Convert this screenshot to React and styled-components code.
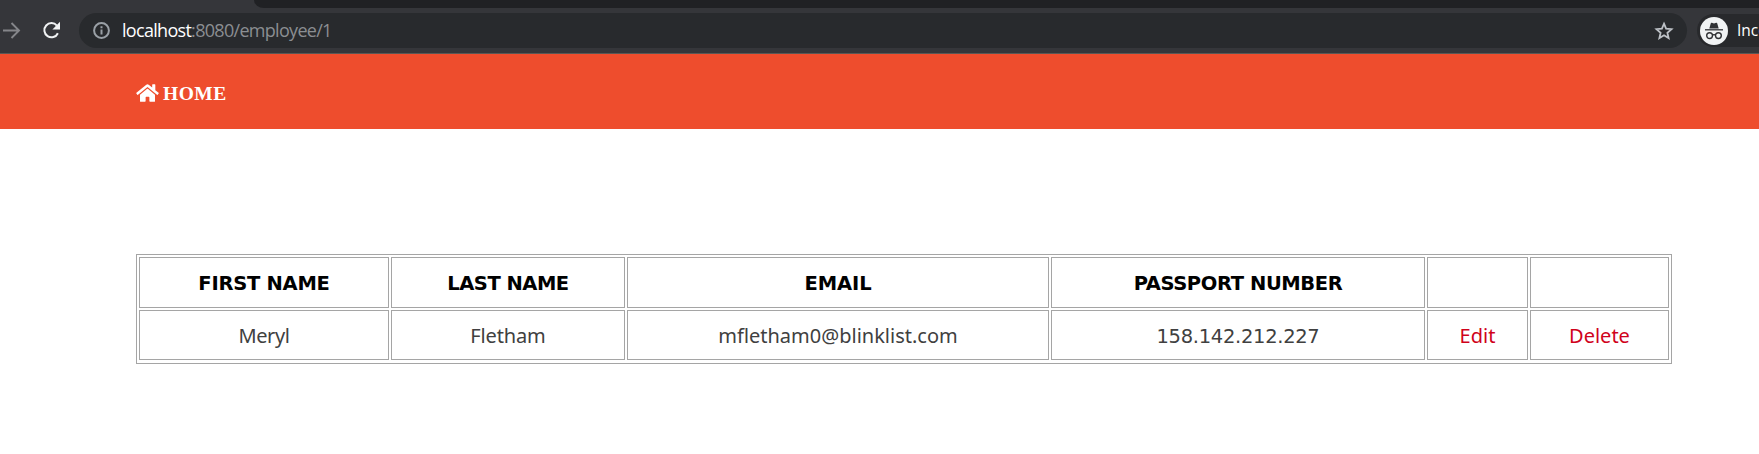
import React from "react";
import styled, { createGlobalStyle } from "styled-components";
import { FaHome } from "react-icons/fa";

const GlobalStyle = createGlobalStyle`
  * { box-sizing: border-box; }
  body { margin: 0; background: #fff; overflow: hidden; }
`;

const Page = styled.div`
  width: 100%;
  height: 454px;
  overflow: hidden;
`;

const Browser = styled.header`
  display: flex;
  flex-direction: column;
  height: 54px;
  background: #35363a;
  border-bottom: 1px solid #5a5754;
  overflow: hidden;
`;

const TabStrip = styled.div`
  flex: none;
  height: 8px;
  margin-left: 254px;
  background: #202124;
  border-bottom-left-radius: 10px 8px;
`;

const Toolbar = styled.div`
  display: flex;
  align-items: center;
  height: 35px;
  margin-top: 5px;
`;

const ToolIcon = styled.svg`
  flex: none;
  display: block;
  width: ${(p) => p.$size}px;
  height: ${(p) => p.$size}px;
  margin-left: ${(p) => p.$gap || 0}px;
  color: ${(p) => p.$color};
`;

const AddressBar = styled.div`
  flex: none;
  display: flex;
  align-items: center;
  width: 1608px;
  height: 35px;
  margin-left: 17px;
  padding: 0 13px 0 14px;
  border-radius: 18px;
  background: #282a2d;
`;

const Url = styled.div`
  flex: 1;
  margin-left: 12px;
  padding-bottom: 1px;
  font: 18px/32px "Open Sans", sans-serif;
  letter-spacing: -0.7px;
  color: #8b8e92;
  white-space: nowrap;
`;

const Host = styled.span`
  color: #fff;
`;

const IncognitoChip = styled.div`
  flex: none;
  display: flex;
  align-items: center;
  width: 120px;
  height: 33px;
  margin-left: 10px;
  padding-left: 3px;
  border-radius: 17px;
  background: #28292c;
  color: #fff;
  font: 15.5px/30px "Open Sans", sans-serif;
`;

const ChipLabel = styled.span`
  margin-left: 9px;
  padding-bottom: 2px;
`;

const Navbar = styled.nav`
  display: flex;
  align-items: center;
  height: 75px;
  padding: 4px 0 0 136px;
  background: #ee4d2d;
`;

const HomeLink = styled.a`
  display: flex;
  align-items: center;
  gap: 4px;
  color: #fff;
  font: bold 19.5px/25px "Liberation Serif", serif;
  letter-spacing: 0.5px;

  svg { width: 23px; height: 20px; margin-top: -2px; }
`;

const Table = styled.div`
  display: grid;
  grid-template-columns: 250px 234px 422px 374px 101px 139px;
  grid-template-rows: 51px 50px;
  gap: 2px;
  width: 1536px;
  margin: 125px 0 0 136px;
  padding: 2px 2px 3px;
  border: 1px solid #a5a5a5;
`;

const Cell = styled.div`
  display: flex;
  align-items: center;
  justify-content: center;
  padding-top: 2px;
  border: 1px solid #a5a5a5;
  color: #404040;
  font: 20px/24px "Noto Sans", sans-serif;
  letter-spacing: ${(p) => p.$spacing || 0}px;
`;

const HeadCell = styled(Cell)`
  color: #000;
  font: bold 19.5px/24px "DejaVu Sans", sans-serif;
`;

const NumberCell = styled(Cell)`
  padding-top: 4px;
  font: 19.5px/24px "DejaVu Sans", sans-serif;
`;

const ActionLink = styled.a`
  color: #d0021b;
`;

const headings = [
  ["FIRST NAME", -0.25],
  ["LAST NAME", -0.5],
  ["EMAIL", -0.1],
  ["PASSPORT NUMBER", -0.4],
  ["", 0],
  ["", 0],
];

export default function App() {
  return (
    <Page>
      <GlobalStyle />
      <Browser>
        <TabStrip />
        <Toolbar>
          <ToolIcon $size={20} $gap={1} $color="#85868a" viewBox="0 0 20 20" fill="none" stroke="currentColor" strokeWidth="1.9">
            <path d="M2 9.5h16M10.5 2l7.5 7.5-7.5 7.5" />
          </ToolIcon>
          <ToolIcon $size={20} $gap={21} $color="#f1f3f4" viewBox="0 0 20 20" fill="none">
            <path d="M15.9 12.2A7.1 7.1 0 1 1 14.9 4.6" stroke="currentColor" strokeWidth="2" />
            <path d="M18 .8v7.6h-7.6z" fill="currentColor" />
          </ToolIcon>
          <AddressBar>
            <ToolIcon $size={17} $color="#9aa0a6" viewBox="0 0 17 17" fill="none" stroke="currentColor">
              <circle cx="8.5" cy="8.5" r="7.4" strokeWidth="2" />
              <path d="M8.5 7.5v5M8.5 4.3v2" strokeWidth="2" />
            </ToolIcon>
            <Url><Host>localhost</Host>:8080/employee/1</Url>
            <ToolIcon $size={20} $color="#bdc1c6" viewBox="0 0 20 20" fill="none" stroke="currentColor" strokeWidth="1.8">
              <path d="M10 2.7l2.1 5 5.4.5-4.1 3.6 1.2 5.3L10 14.3l-4.6 2.8 1.2-5.3-4.1-3.6 5.4-.5z" />
            </ToolIcon>
          </AddressBar>
          <IncognitoChip>
            <ToolIcon $size={28} viewBox="0 0 28 28">
              <circle cx="14" cy="14" r="14" fill="#f1f3f4" />
              <path d="M9.3 11.5l1.5-5.2q.3-.8 1.1-.5l2.1.6 2.1-.6q.8-.3 1.1.5l1.5 5.2z" fill="#303134" />
              <path d="M5 12.8h18" stroke="#303134" strokeWidth="1.3" />
              <g fill="none" stroke="#303134" strokeWidth="1.4">
                <circle cx="9.6" cy="18.6" r="2.9" />
                <circle cx="18.4" cy="18.6" r="2.9" />
                <path d="M12.4 18q1.6-.8 3.2 0" />
              </g>
            </ToolIcon>
            <ChipLabel>Incognito</ChipLabel>
          </IncognitoChip>
        </Toolbar>
      </Browser>
      <Navbar>
        <HomeLink><FaHome /><span>HOME</span></HomeLink>
      </Navbar>
      <Table>
        {headings.map(([label, spacing], i) => (
          <HeadCell key={i} $spacing={spacing}>{label}</HeadCell>
        ))}
        <Cell $spacing={-0.4}>Meryl</Cell>
        <Cell $spacing={-0.15}>Fletham</Cell>
        <Cell>mfletham0@blinklist.com</Cell>
        <NumberCell $spacing={-0.3}>158.142.212.227</NumberCell>
        <Cell><ActionLink>Edit</ActionLink></Cell>
        <Cell><ActionLink>Delete</ActionLink></Cell>
      </Table>
    </Page>
  );
}
